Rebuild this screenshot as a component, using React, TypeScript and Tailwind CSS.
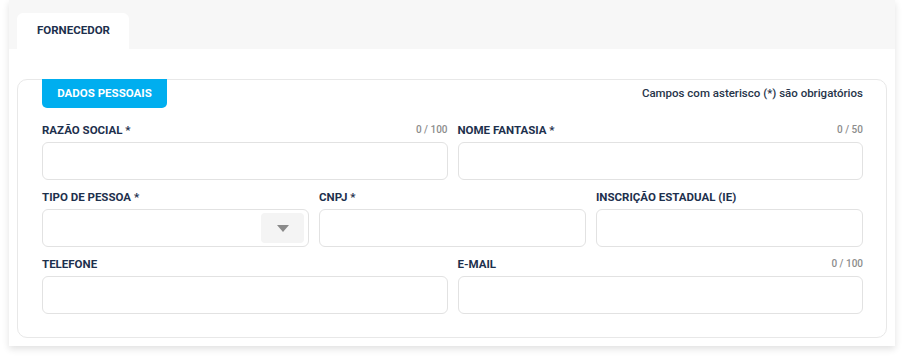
import React from "react";

type FieldProps = {
  label: string;
  counter?: string;
  select?: boolean;
};

const Field = ({ label, counter, select }: FieldProps) => {
  return (
    <div className="flex flex-col">
      <div className="flex items-center justify-between h-[16px] mb-[4px]">
        <span className="text-[11.5px] font-bold text-[#1d304d] leading-[16px]">
          {label}
        </span>
        {counter && (
          <span className="text-[10px] font-medium text-[#8c8c8c] leading-[16px]">
            {counter}
          </span>
        )}
      </div>
      <div className="relative h-[38px] rounded-[6px] border border-[#e2e2e2] bg-white">
        {select && (
          <div className="absolute right-[4px] top-[3px] flex h-[30px] w-[43px] items-center justify-center rounded-[4px] bg-[#f4f4f4]">
            <svg width="12" height="7" viewBox="0 0 12 7">
              <path d="M0 0 L12 0 L6 7 Z" fill="#8a8a8a" />
            </svg>
          </div>
        )}
      </div>
    </div>
  );
};

const App = () => {
  return (
    <div
      className="w-[904px] h-[363px] bg-white px-[9px]"
      style={{ fontFamily: "Roboto, 'Liberation Sans', sans-serif" }}
    >
      <div className="bg-white shadow-[0_3px_7px_rgba(0,0,0,0.12)]">
        <div className="h-[49px] bg-[#f7f7f7] pl-[8px] pt-[13px]">
          <div className="flex h-[36px] w-[112px] items-center rounded-t-[6px] bg-white pl-[20px]">
            <span className="text-[11.5px] font-bold text-[#1d304d]">FORNECEDOR</span>
          </div>
        </div>

        <div className="px-[8px] pt-[30px] pb-[8px]">
          <div className="rounded-[10px] border border-[#e8e8e8] pl-[24px] pr-[23px] pb-[23px]">
            <div className="flex h-[29px] items-center justify-between -mt-px">
              <div className="flex h-[29px] w-[125px] items-center justify-center rounded-b-[5px] bg-[#00aeef]">
                <span className="text-[11.5px] font-bold text-white">DADOS PESSOAIS</span>
              </div>
              <span className="text-[11.5px] font-medium text-[#27354a]">
                Campos com asterisco (*) são obrigatórios
              </span>
            </div>

            <div className="mt-[14px] flex flex-col gap-[9px]">
              <div className="grid grid-cols-2 gap-x-[10px]">
                <Field label="RAZÃO SOCIAL *" counter="0 / 100" />
                <Field label="NOME FANTASIA *" counter="0 / 50" />
              </div>
              <div className="grid grid-cols-3 gap-x-[10px]">
                <Field label="TIPO DE PESSOA *" select />
                <Field label="CNPJ *" />
                <Field label="INSCRIÇÃO ESTADUAL (IE)" />
              </div>
              <div className="grid grid-cols-2 gap-x-[10px]">
                <Field label="TELEFONE" />
                <Field label="E-MAIL" counter="0 / 100" />
              </div>
            </div>
          </div>
        </div>
      </div>
    </div>
  );
};

export default App;
